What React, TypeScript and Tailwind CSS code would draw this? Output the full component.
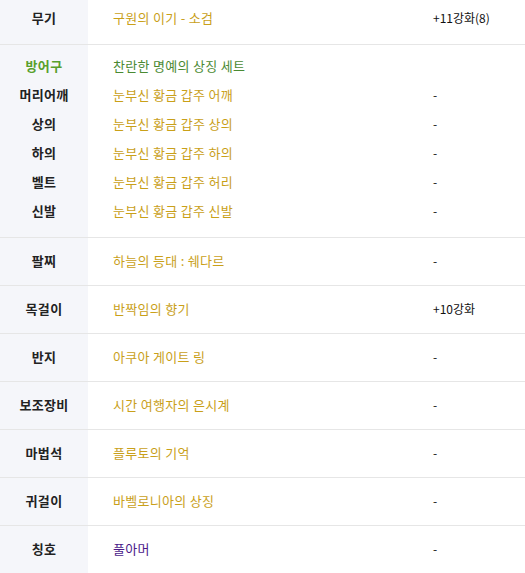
import React from "react";

const GOLD = "text-[#c9a019]";
const font = { fontFamily: '"Noto Sans CJK KR", "Noto Sans", sans-serif' };

type Row = { label: string; name: string; value: string; color?: string };

const rows: Row[] = [
  { label: "팔찌", name: "하늘의 등대 : 쉐다르", value: "-" },
  { label: "목걸이", name: "반짝임의 향기", value: "+10강화" },
  { label: "반지", name: "아쿠아 게이트 링", value: "-" },
  { label: "보조장비", name: "시간 여행자의 은시계", value: "-" },
  { label: "마법석", name: "플루토의 기억", value: "-" },
  { label: "귀걸이", name: "바벨로니아의 상징", value: "-" },
  { label: "칭호", name: "풀아머", value: "-", color: "text-[#4b1a8a]" },
];

const armor = [
  { label: "머리어깨", name: "눈부신 황금 갑주 어깨" },
  { label: "상의", name: "눈부신 황금 갑주 상의" },
  { label: "하의", name: "눈부신 황금 갑주 하의" },
  { label: "벨트", name: "눈부신 황금 갑주 허리" },
  { label: "신발", name: "눈부신 황금 갑주 신발" },
];

function Line({ label, name, value, color, labelColor }: { label: string; name: string; value: string; color?: string; labelColor?: string }) {
  return (
    <div className="grid grid-cols-[88px_345px_1fr] h-[29px] items-center">
      <div className={`text-center font-bold text-[13px] tracking-[0.3px] ${labelColor ?? "text-[#222]"}`}>{label}</div>
      <div className={`pl-[25px] text-[13px] tracking-[0.3px] ${color ?? GOLD}`}>{name}</div>
      <div className="text-[12px] text-[#111]">{value}</div>
    </div>
  );
}

export default function App() {
  return (
    <div className="w-[525px] h-[573px] bg-white overflow-hidden relative" style={font}>
      <div className="absolute left-0 top-0 bottom-0 w-[88px] bg-[#f5f6fa]" />
      <div className="relative">
        <div className="h-[45px] border-b border-[#e6e6e6] pt-[3px]">
          <Line label="무기" name="구원의 이기 - 소검" value="+11강화(8)" />
        </div>
        <div className="h-[193px] border-b border-[#e6e6e6] pt-[6px]">
          <Line label="방어구" name="찬란한 명예의 상징 세트" value="" color="text-[#4a8a32]" labelColor="text-[#58a02c]" />
          {armor.map((a) => (
            <Line key={a.label} label={a.label} name={a.name} value="-" />
          ))}
        </div>
        {rows.map((r, i) => (
          <div
            key={r.label}
            className={`h-[48px] flex items-center pb-[2px] ${i < rows.length - 1 ? "border-b border-[#e6e6e6]" : ""}`}
          >
            <div className="w-full">
              <Line label={r.label} name={r.name} value={r.value} color={r.color} />
            </div>
          </div>
        ))}
      </div>
    </div>
  );
}
